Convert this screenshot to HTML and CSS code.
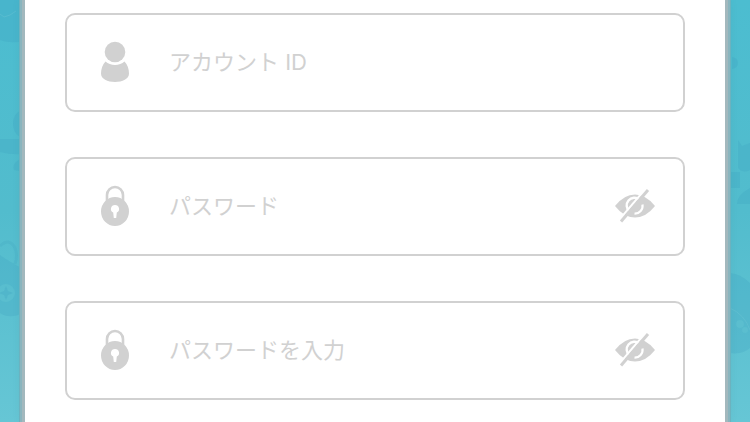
FILE: index.html
```html
<!DOCTYPE html>
<html lang="ja">
    <head>
        <meta charset="UTF-8" />
        <meta name="viewport" content="width=device-width, initial-scale=1.0" />
        <link rel="stylesheet" href="styles.css">
        <title>アカウント</title>
    </head>
    <body>
        <!-- icons -->
        <svg class="sprite" aria-hidden="true">
            <symbol id="icon-user" viewBox="0 0 30 42">
                <circle cx="15" cy="11" r="10.3" />
                <path d="M5.5 20.5C2.5 23.5 1 28 1 32.500C1 38 7.500 41 15 41S29 38 29 32.500C29 28 27.500 23.500 24.500 20.500C22 22.700 18.800 23.900 15 23.900S8 22.700 5.500 20.500Z" />
            </symbol>
            <symbol id="icon-lock" viewBox="0 0 30 42">
                <path d="M7 16V10a8 8 0 0 1 16 0V16" fill="none" stroke="currentColor" stroke-width="2.600" />
                <path fill-rule="evenodd" d="M15 12a14 14.500 0 1 0 0 29a14 14.500 0 1 0 0-29ZM15 20a4 4 0 0 1 1.800 7.600L16.200 33h-2.400L13.200 27.600A4 4 0 0 1 15 20Z" />
            </symbol>
            <symbol id="icon-eye-off" viewBox="0 0 42 36">
                <path d="M1 18Q10 6.500 21 6.500T41 18Q32 29.500 21 29.500T1 18Z" />
                <path d="M15.500 23.500A7.800 7.800 0 0 1 25.500 11.500" fill="none" stroke="#fff" stroke-width="2.400" />
                <path d="M28.500 16.500A7.800 7.800 0 0 1 20.500 25.600" fill="none" stroke="#fff" stroke-width="2.200" />
                <path d="M17.500 18.500a4 4 0 0 1 4.500-4" fill="none" stroke="#fff" stroke-opacity="0.6" stroke-width="1.600" />
                <path d="M5.500 31.500L31 1.500" stroke="#fff" stroke-width="2" />
                <path d="M7 33.500L34 2" stroke="currentColor" stroke-width="3" />
            </symbol>
        </svg>

        <!-- sea pattern on both sides of the card -->
        <svg class="side side-left" viewBox="0 0 25 422" preserveAspectRatio="xMinYMin slice" aria-hidden="true">
            <path d="M0 0H25V41Q9 44 0 40Z" />
            <path d="M0 14L4 17L10 15L16 11" class="line" />
            <path d="M25 109Q13 112 13 124Q14 137 25 138Z" />
            <path d="M0 139H25V154Q11 155 0 152Z" />
            <path d="M25 157Q11 162 14 170L25 172Z" />
            <path d="M0 246Q9 237 15 248Q18 256 15 264" class="ring" />
            <path d="M0 255Q10 262 25 270V312Q10 320 0 313Z" />
            <circle cx="6" cy="293" r="9" class="light" />
            <path d="M6 286L8 291L13 293L8 295L6 300L4 295L-1 293L4 291Z" />
        </svg>
        <svg class="side side-right" viewBox="0 0 25 422" preserveAspectRatio="xMaxYMin slice" aria-hidden="true">
            <path d="M7 57Q13 58 13 63T7 69Z" />
            <path d="M13 140L17 146L25 143V170Q18 174 13 168Z" />
            <path d="M5 172H15V188H5Z" />
            <path d="M12 204Q12 195 25 188V204Z" />
            <path d="M5 273Q16 274 25 283V348Q17 355 5 353Z" />
            <path d="M5 308Q20 315 25 330" class="line" />
            <circle cx="15" cy="324" r="4" class="light" />
            <circle cx="20" cy="330" r="3" class="light" />
        </svg>

        <main class="card">
            <form class="account-form">
                <div class="field">
                    <label for="account-id" aria-label="アカウントID">
                        <svg class="field-icon" aria-hidden="true"><use href="#icon-user" /></svg>
                    </label>
                    <input type="text" id="account-id" placeholder="アカウント ID" autocomplete="username" />
                </div>
                <div class="field">
                    <label for="password" aria-label="パスワード">
                        <svg class="field-icon" aria-hidden="true"><use href="#icon-lock" /></svg>
                    </label>
                    <input type="password" id="password" placeholder="パスワード" autocomplete="new-password" />
                    <button type="button" class="toggle-btn" aria-label="パスワードを表示">
                        <svg class="eye-icon" aria-hidden="true"><use href="#icon-eye-off" /></svg>
                    </button>
                </div>
                <div class="field">
                    <label for="password-confirm" aria-label="パスワードを入力">
                        <svg class="field-icon" aria-hidden="true"><use href="#icon-lock" /></svg>
                    </label>
                    <input type="password" id="password-confirm" placeholder="パスワードを入力" autocomplete="new-password" />
                    <button type="button" class="toggle-btn" aria-label="パスワードを表示">
                        <svg class="eye-icon" aria-hidden="true"><use href="#icon-eye-off" /></svg>
                    </button>
                </div>
            </form>
        </main>
        <script>
            const toggleBtns = document.querySelectorAll('.toggle-btn');

            toggleBtns.forEach(btn => {
                btn.addEventListener('click', () => {
                    const input = btn.previousElementSibling;
                    input.type = input.type === 'password' ? 'text' : 'password';
                });
            });
        </script>
    </body>
</html>
```
FILE: styles.css
```css
* {
    margin: 0;
    padding: 0;
    box-sizing: border-box;
}

:root {
    --line: #d1d1d1;
    --text: #555;
    --font-fam: 'Inter', 'Noto Sans CJK JP', sans-serif;
}

/* body */
body {
    position: relative;
    min-height: 100vh;
    background: linear-gradient(#4cbdd0, #52bccd 50%, #66c6d5);
    font-family: var(--font-fam);
}

.sprite {
    position: absolute;
    width: 0;
    height: 0;
}

/* side pattern */
.side {
    position: absolute;
    top: 0;
    width: 25px;
    height: 100%;
    fill: #3c9fc0;
    fill-opacity: 0.25;
}

.side-left {
    left: 0;
}

.side-right {
    right: 0;
}

.side .line {
    fill: none;
    stroke: #6fc5d4;
    stroke-opacity: 0.4;
}

.side .ring {
    fill: none;
    stroke: #3c9fc0;
    stroke-opacity: 0.2;
    stroke-width: 3;
}

.side .light {
    fill: #6fd0d8;
}

/* ======= card ======= */
.card {
    position: relative;
    min-height: 100vh;
    margin-inline: 25px;
    padding: 13px 40px 22px;
    background-color: #fff;
    box-shadow: 0 0 0 3px #a3b8bd, 0 0 0 5px #8ab5be, 0 0 0 6px #6cb2bf, 0 0 10px rgba(70, 120, 130, 0.4);
    clip-path: inset(0 -25px);
}

.account-form {
    display: flex;
    flex-direction: column;
    gap: 45px;
}

/* field */
.field {
    display: flex;
    align-items: center;
    height: 99px;
    padding: 0 27px 2px 33px;
    border: 2px solid var(--line);
    border-radius: 10px;
    color: var(--line);
}

.field:focus-within {
    border-color: #50bccd;
}

.field-icon {
    display: block;
    width: 30px;
    height: 42px;
    fill: currentColor;
}

.field input {
    flex: 1;
    min-width: 0;
    margin-left: 39px;
    border: 0;
    outline: 0;
    background: none;
    color: var(--text);
    font-family: var(--font-fam);
    font-size: 22px;
    line-height: 32px;
}

.field input::placeholder {
    color: var(--line);
    opacity: 1;
}

.toggle-btn {
    border: 0;
    background: none;
    color: var(--line);
    cursor: pointer;
}

.eye-icon {
    display: block;
    width: 42px;
    height: 36px;
    fill: currentColor;
}
```
